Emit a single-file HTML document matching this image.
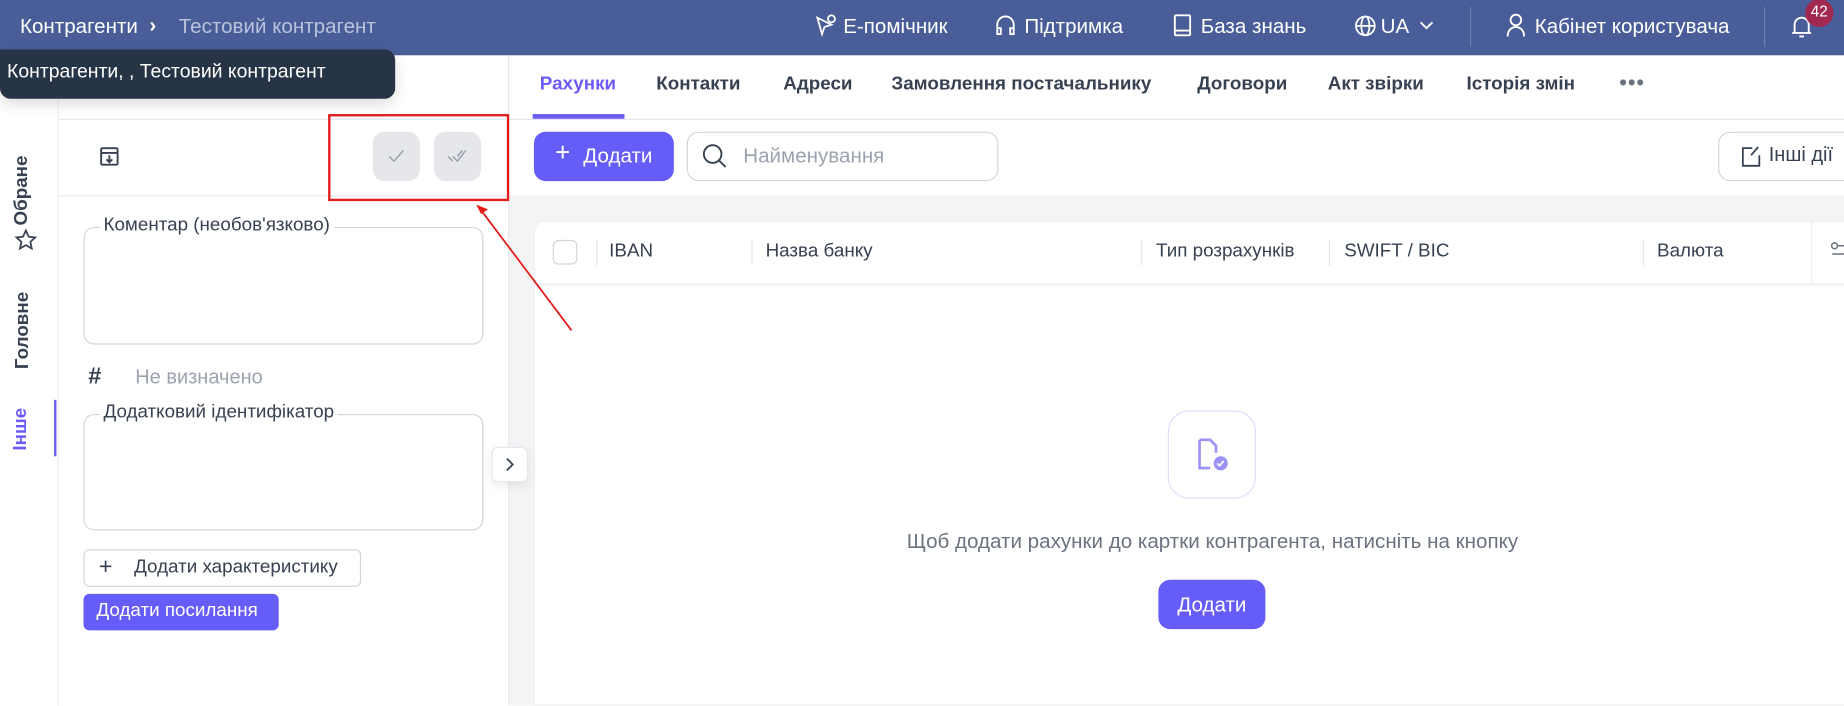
<!DOCTYPE html>
<html><head><meta charset="utf-8"><style>
*{box-sizing:border-box;margin:0;padding:0}
html,body{width:1844px;height:706px;overflow:hidden;background:#fff}
#w{width:1568px;height:600px;position:relative;transform:scale(1.17602);transform-origin:0 0;font-family:"Liberation Sans",sans-serif;color:#374151;font-size:16px}
.a{position:absolute;white-space:nowrap}
.hd{left:0;top:0;width:1568px;height:47px;background:#495e99}
.hd .a{color:#fff;top:12px;font-size:17.5px}
svg{position:absolute;overflow:visible}
.tab{top:63px;font-size:16px;color:#374151;font-weight:bold}
.th{top:205px;font-size:16px;color:#374151}
.sep{position:absolute;top:204px;width:1px;height:22px;background:#e5e7eb}
.rot{transform:rotate(-90deg);transform-origin:center;font-weight:bold;font-size:16px}
</style></head><body><div id="w">
<div class="a hd">
 <div class="a" style="left:17px;top:12px">Контрагенти</div>
 <div class="a" style="left:127px;top:11px;font-weight:bold">›</div>
 <div class="a" style="left:152px;top:12px;color:#bac3dc">Тестовий контрагент</div>
 <svg style="left:692px;top:12px" width="20" height="20" fill="none" stroke="#fff" stroke-width="1.5"><path d="M3 3l4 14 2-6 6-2z"/><circle cx="15" cy="4" r="3"/></svg>
 <div class="a" style="left:717px">Е-помічник</div>
 <svg style="left:845px;top:12px" width="20" height="20" fill="none" stroke="#fff" stroke-width="1.6"><path d="M3 13V9a7 7 0 0114 0v4M3 12h3v5H3zM14 12h3v5h-3z"/></svg>
 <div class="a" style="left:871px">Підтримка</div>
 <svg style="left:997px;top:12px" width="18" height="20" fill="none" stroke="#fff" stroke-width="1.6"><rect x="2" y="1" width="13" height="17" rx="1"/><path d="M2 14h13"/></svg>
 <div class="a" style="left:1021px">База знань</div>
 <svg style="left:1151px;top:12px" width="20" height="20" fill="none" stroke="#fff" stroke-width="1.5"><circle cx="10" cy="10" r="8"/><ellipse cx="10" cy="10" rx="3.5" ry="8"/><path d="M2 10h16"/></svg>
 <div class="a" style="left:1174px">UA</div>
 <svg style="left:1207px;top:18px" width="12" height="8" fill="none" stroke="#fff" stroke-width="1.6"><path d="M1 1l5 5 5-5"/></svg>
 <div style="position:absolute;left:1250px;top:6px;width:1px;height:34px;background:#6d7eb0"></div>
 <svg style="left:1281px;top:11px" width="16" height="22" fill="none" stroke="#fff" stroke-width="1.6"><circle cx="8" cy="6" r="4.5"/><path d="M1 20c0-5 3-8 7-8s7 3 7 8"/></svg>
 <div class="a" style="left:1305px">Кабінет користувача</div>
 <div style="position:absolute;left:1500px;top:6px;width:1px;height:34px;background:#6d7eb0"></div>
 <svg style="left:1523px;top:12px" width="18" height="22" fill="none" stroke="#fff" stroke-width="1.6"><path d="M3 16V9a6 6 0 0112 0v7zM1 16h16M7 19h4"/></svg>
 <div style="position:absolute;left:1535px;top:-1px;width:24px;height:24px;border-radius:50%;background:#a1294f;color:#fff;font-size:13px;text-align:center;line-height:22px">42</div>
</div>
<!-- left rail -->
<div style="position:absolute;left:49px;top:47px;width:1px;height:553px;background:#eceef1"></div>
<div class="a rot" style="left:-11px;top:153px;color:#374151">Обране</div>
<svg style="left:12px;top:194px" width="20" height="20" fill="none" stroke="#374151" stroke-width="1.5"><path d="M10 2l2.4 5.3 5.6.6-4.2 3.8 1.2 5.6L10 14.4l-5 2.9 1.2-5.6L2 7.9l5.6-.6z"/></svg>
<div class="a rot" style="left:-13px;top:272px">Головне</div>
<div class="a rot" style="left:0px;top:356px;color:#6b5cf6">Інше</div>
<div style="position:absolute;left:46px;top:340px;width:2px;height:48px;background:#6b5cf6"></div>
<!-- left panel -->
<div style="position:absolute;left:50px;top:101px;width:382px;height:1px;background:#e5e7eb"></div>
<div style="position:absolute;left:50px;top:166px;width:382px;height:1px;background:#e5e7eb"></div>
<svg style="left:84px;top:124px" width="18" height="18" fill="none" stroke="#374151" stroke-width="1.6"><rect x="2" y="2" width="14" height="14" rx="1"/><path d="M2 6h14M9 8v6M6.5 11.5L9 14l2.5-2.5"/></svg>
<div style="position:absolute;left:317px;top:112px;width:40px;height:42px;border-radius:10px;background:#e6e7ea"></div>
<div style="position:absolute;left:369px;top:112px;width:40px;height:42px;border-radius:10px;background:#e6e7ea"></div>
<svg style="left:329px;top:126px" width="16" height="14" fill="none" stroke="#9ca3af" stroke-width="1.3"><path d="M2 7l4 4 8-9"/></svg>
<svg style="left:380px;top:126px" width="18" height="14" fill="none" stroke="#9ca3af" stroke-width="1.3"><path d="M1 7l4 4M5 7l4 4 7-9M9 7l4-5"/></svg>
<div style="position:absolute;left:71px;top:193px;width:340px;height:100px;border:1px solid #d1d5db;border-radius:9px"></div>
<div class="a" style="left:85px;top:183px;background:#fff;padding:0 3px;font-size:16px">Коментар (необов'язково)</div>
<div class="a" style="left:75px;top:309px;font-size:20px;font-weight:bold;color:#374151">#</div>
<div class="a" style="left:115px;top:311px;color:#9ca3af;font-size:17px">Не визначено</div>
<div style="position:absolute;left:71px;top:352px;width:340px;height:99px;border:1px solid #d1d5db;border-radius:9px"></div>
<div class="a" style="left:85px;top:342px;background:#fff;padding:0 3px;font-size:16px">Додатковий ідентифікатор</div>
<div style="position:absolute;left:71px;top:467px;width:236px;height:32px;border:1px solid #d1d5db;border-radius:5px"></div>
<div class="a" style="left:84px;top:471px;font-size:20px;color:#374151">+</div>
<div class="a" style="left:114px;top:474px;font-size:16px">Додати характеристику</div>
<div style="position:absolute;left:71px;top:505px;width:166px;height:31px;border-radius:5px;background:#665df9;color:#fff;font-size:16px;padding:6px 0 0 11px">Додати посилання</div>
<!-- divider/gray -->
<div style="position:absolute;left:432px;top:47px;width:1px;height:553px;background:#e5e7eb"></div>
<div style="position:absolute;left:433px;top:166px;width:1135px;height:434px;background:#f3f4f6"></div>
<div style="position:absolute;left:454px;top:188px;width:1114px;height:412px;background:#fff;border-radius:8px 0 0 0;border:1px solid #eceef1;border-right:none"></div>
<div style="position:absolute;left:418px;top:380px;width:31px;height:30px;border:1px solid #e5e7eb;border-radius:5px;background:#fff;box-shadow:0 3px 8px rgba(0,0,0,.08)"></div>
<svg style="left:429px;top:389px" width="8" height="12" fill="none" stroke="#374151" stroke-width="1.5"><path d="M2 1l5 5-5 5"/></svg>
<!-- tabs -->
<div style="position:absolute;left:433px;top:101px;width:1135px;height:1px;background:#e5e7eb"></div>
<div class="a tab" style="left:459px;color:#6b5cf6">Рахунки</div>
<div style="position:absolute;left:453px;top:97px;width:78px;height:4px;background:#6b5cf6"></div>
<div class="a tab" style="left:558px">Контакти</div>
<div class="a tab" style="left:666px">Адреси</div>
<div class="a tab" style="left:758px">Замовлення постачальнику</div>
<div class="a tab" style="left:1018px">Договори</div>
<div class="a tab" style="left:1129px">Акт звірки</div>
<div class="a tab" style="left:1247px">Історія змін</div>
<div class="a tab" style="left:1377px;top:60px;font-size:18px;color:#6b7280;letter-spacing:1px">•••</div>
<!-- toolbar -->
<div style="position:absolute;left:454px;top:112px;width:119px;height:42px;border-radius:10px;background:#665df9"></div>
<div class="a" style="left:472px;top:117px;color:#fff;font-size:22px">+</div>
<div class="a" style="left:496px;top:122px;color:#fff;font-size:17.5px">Додати</div>
<div style="position:absolute;left:584px;top:112px;width:265px;height:42px;border-radius:10px;border:1px solid #d1d5db"></div>
<svg style="left:597px;top:122px" width="22" height="22" fill="none" stroke="#374151" stroke-width="1.6"><circle cx="9" cy="9" r="7.5"/><path d="M14.5 14.5L20 20"/></svg>
<div class="a" style="left:632px;top:122px;color:#9ca3af;font-size:17.5px">Найменування</div>
<div style="position:absolute;left:1461px;top:112px;width:120px;height:42px;border-radius:10px;border:1px solid #d1d5db"></div>
<svg style="left:1480px;top:124px" width="18" height="18" fill="none" stroke="#374151" stroke-width="1.5"><path d="M10 2H2v15h14V8"/><path d="M15 1l-6 7"/></svg>
<div class="a" style="left:1504px;top:122px;font-size:17px">Інші дії</div>
<!-- table head -->
<div style="position:absolute;left:470px;top:204px;width:21px;height:21px;border:1.5px solid #d1d5db;border-radius:5px"></div>
<div class="sep" style="left:507px"></div><div class="sep" style="left:639px"></div><div class="sep" style="left:970px"></div><div class="sep" style="left:1130px"></div><div class="sep" style="left:1397px"></div>
<div style="position:absolute;left:1540px;top:188px;width:1px;height:53px;background:#eceef1"></div>
<div class="a th" style="left:518px">IBAN</div>
<div class="a th" style="left:651px">Назва банку</div>
<div class="a th" style="left:983px">Тип розрахунків</div>
<div class="a th" style="left:1143px">SWIFT / BIC</div>
<div class="a th" style="left:1409px">Валюта</div>
<svg style="left:1556px;top:205px" width="14" height="16" fill="none" stroke="#6b7280" stroke-width="1.3"><circle cx="4" cy="4" r="2.5"/><path d="M6.5 4H14M2 11h12"/></svg>
<div style="position:absolute;left:455px;top:241px;width:1113px;height:2px;background:#eef0f2"></div>
<!-- empty -->
<div style="position:absolute;left:993px;top:349px;width:75px;height:75px;border:1px solid #e0dcfb;border-radius:18px"></div>
<svg style="left:1017px;top:372px" width="28" height="30"><path d="M3 2h9l5 5v6M3 2v24h9" fill="none" stroke="#9a92f7" stroke-width="2.2"/><circle cx="21" cy="22" r="6" fill="#9a92f7"/><path d="M18 22l2 2 3.5-4" stroke="#fff" stroke-width="1.5" fill="none"/></svg>
<div class="a" style="left:731px;top:450px;color:#6b7280;font-size:17.5px;width:600px;text-align:center">Щоб додати рахунки до картки контрагента, натисніть на кнопку</div>
<div style="position:absolute;left:985px;top:493px;width:91px;height:42px;border-radius:10px;background:#665df9;color:#fff;font-size:17.5px;text-align:center;line-height:42px">Додати</div>
<!-- annotation -->
<div style="position:absolute;left:279px;top:97px;width:154px;height:74px;border:2px solid #e41b1b"></div>
<svg style="left:0;top:0" width="600" height="300"><path d="M486 281L410 180" stroke="#e41b1b" stroke-width="1.5"/><path d="M405 174l10 4-6 4z" fill="#e41b1b"/></svg>
<!-- tooltip -->
<div style="position:absolute;left:12px;top:36px;width:0;height:0;border:6px solid transparent;border-bottom-color:#263445"></div>
<div style="position:absolute;left:0;top:42px;width:336px;height:42px;background:#263445;border-radius:0 9px 9px 9px;box-shadow:0 4px 12px rgba(0,0,0,.15);color:#fff;font-size:16.5px;padding:10px 0 0 6px">Контрагенти, , Тестовий контрагент</div>
</div></body></html>
